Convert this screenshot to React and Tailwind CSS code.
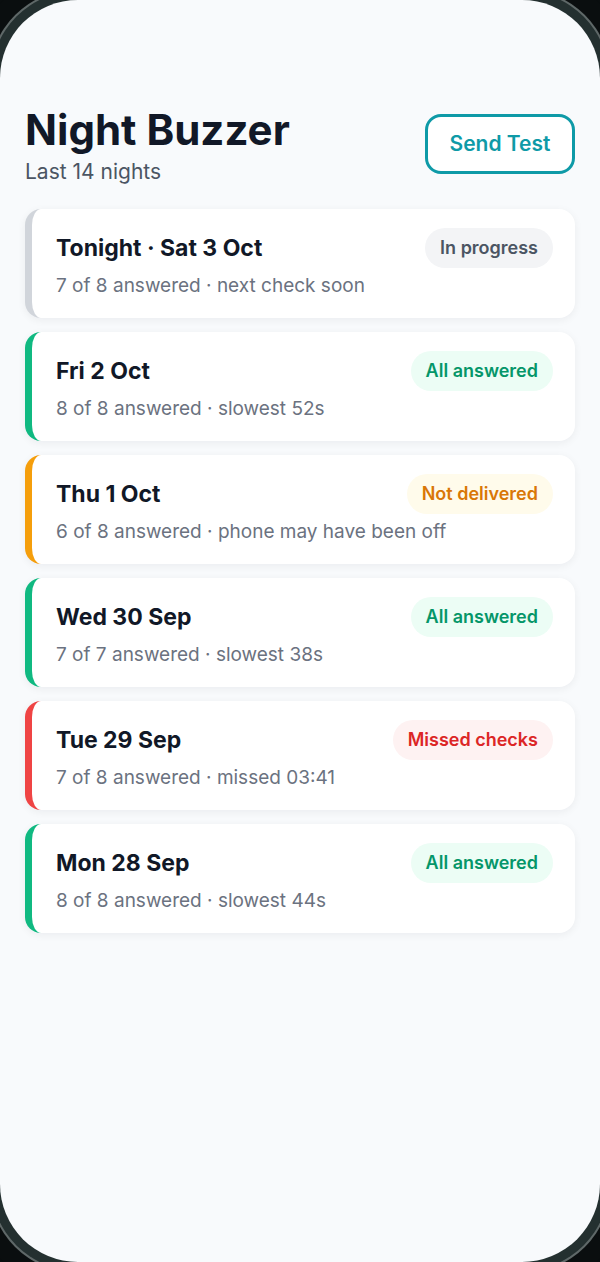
import React from "react";

const nights = [
  { title: "Tonight · Sat 3 Oct", sub: "7 of 8 answered · next check soon", badge: "In progress", tone: "gray" },
  { title: "Fri 2 Oct", sub: "8 of 8 answered · slowest 52s", badge: "All answered", tone: "green" },
  { title: "Thu 1 Oct", sub: "6 of 8 answered · phone may have been off", badge: "Not delivered", tone: "amber" },
  { title: "Wed 30 Sep", sub: "7 of 7 answered · slowest 38s", badge: "All answered", tone: "green" },
  { title: "Tue 29 Sep", sub: "7 of 8 answered · missed 03:41", badge: "Missed checks", tone: "red" },
  { title: "Mon 28 Sep", sub: "8 of 8 answered · slowest 44s", badge: "All answered", tone: "green" },
];

const tones = {
  gray: { bar: "border-l-[#d1d5db]", badge: "bg-[#f3f4f6] text-[#4b5563]" },
  green: { bar: "border-l-[#10b981]", badge: "bg-[#ecfdf5] text-[#059669]" },
  amber: { bar: "border-l-[#f59e0b]", badge: "bg-[#fffbeb] text-[#d97706]" },
  red: { bar: "border-l-[#ef4444]", badge: "bg-[#fef2f2] text-[#dc2626]" },
};

function NightCard({ night }) {
  const t = tones[night.tone];
  return (
    <div
      className={`flex items-start justify-between gap-3 rounded-2xl border-l-[7px] ${t.bar} bg-white pl-6 pr-[22px] pt-[24px] pb-[19px] shadow-[0_2px_8px_rgba(15,23,42,0.06)]`}
    >
      <div className="flex min-w-0 flex-1 flex-col gap-[10px]">
        <div className="whitespace-nowrap text-[23px] font-bold leading-[30px] text-[#111827]">{night.title}</div>
        <div className="whitespace-nowrap text-[19px] leading-[26px] text-[#6b7280]">{night.sub}</div>
      </div>
      <div className={`mt-[-5px] whitespace-nowrap rounded-full px-[15px] py-[8px] text-[18px] font-semibold leading-[24px] ${t.badge}`}>
        {night.badge}
      </div>
    </div>
  );
}

export default function App() {
  return (
    <div
      className="h-[1262px] w-[600px] overflow-hidden bg-[#0a0e0f]"
      style={{ fontFamily: "Inter, 'Noto Sans', sans-serif" }}
    >
      {/* phone screen with bezel rings */}
      <div className="h-full w-full rounded-[78px] bg-[#f8fafc] px-[25px] pt-[106px] shadow-[0_0_0_9px_#243030,0_0_0_11px_#5f6868,0_0_0_30px_#0a0e0f]">
        {/* header */}
        <div className="flex items-start justify-between">
          <div>
            <h1 className="text-[42px] font-bold leading-[48px] text-[#111827]">Night Buzzer</h1>
            <p className="mt-[5px] text-[21px] leading-[26px] text-[#4b5563]">Last 14 nights</p>
          </div>
          <button className="mt-[8px] h-[60px] w-[150px] rounded-2xl border-[3px] border-[#0e9aa7] bg-white text-[21px] font-semibold text-[#0e9aa7]">
            Send Test
          </button>
        </div>

        {/* nights */}
        <div className="mt-[24px] flex flex-col gap-[14px]">
          {nights.map((n) => (
            <NightCard key={n.title} night={n} />
          ))}
        </div>
      </div>
    </div>
  );
}
